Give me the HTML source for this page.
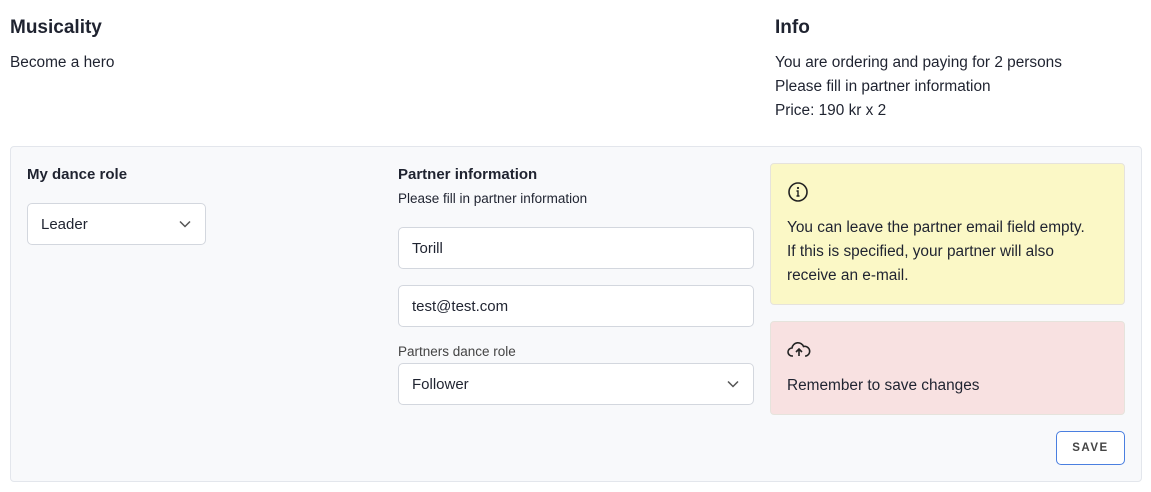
<!DOCTYPE html>
<html><head><style>
*{box-sizing:border-box;margin:0;padding:0}
body{width:1151px;height:492px;background:#fff;font-family:"Liberation Sans",sans-serif;color:#1f2330;position:relative;overflow:hidden}
.a{position:absolute}
h2{font-size:19px;font-weight:600}
.t{font-size:15.4px;line-height:24px}
.panel{left:10px;top:146px;width:1132px;height:336px;background:#f8f9fb;border:1px solid #e3e6ec;border-radius:4px}
.inp{background:#fff;border:1px solid #d3d7de;border-radius:5px;font-size:15px;padding-left:13px;display:flex;align-items:center}
.chev{position:absolute;right:14px;top:50%;margin-top:-4px}
.box{border:1px solid #e6e3dc;border-radius:4px}
</style></head><body>
<h2 class="a" style="left:10px;top:17px">Musicality</h2>
<div class="a t" style="left:10px;top:51px">Become a hero</div>
<h2 class="a" style="left:775px;top:17px">Info</h2>
<div class="a t" style="left:775px;top:51px">You are ordering and paying for 2 persons<br>Please fill in partner information<br>Price: 190 kr x 2</div>
<div class="a panel"></div>
<div class="a" style="left:27px;top:166px;font-size:15px;font-weight:600">My dance role</div>
<div class="a inp" style="left:27px;top:203px;width:179px;height:42px">Leader<svg class="chev" width="12" height="8" viewBox="0 0 12 8"><path d="M1 1.5l5 5 5-5" fill="none" stroke="#555" stroke-width="1.5"/></svg></div>
<div class="a" style="left:398px;top:166px;font-size:15px;font-weight:600">Partner information</div>
<div class="a" style="left:398px;top:191px;font-size:13.5px">Please fill in partner information</div>
<div class="a inp" style="left:398px;top:227px;width:356px;height:42px">Torill</div>
<div class="a inp" style="left:398px;top:285px;width:356px;height:42px">test@test.com</div>
<div class="a" style="left:398px;top:344px;font-size:13.5px;color:#444">Partners dance role</div>
<div class="a inp" style="left:398px;top:363px;width:356px;height:42px">Follower<svg class="chev" width="12" height="8" viewBox="0 0 12 8"><path d="M1 1.5l5 5 5-5" fill="none" stroke="#555" stroke-width="1.5"/></svg></div>
<div class="a box" style="left:770px;top:163px;width:355px;height:142px;background:#fbf8c6"></div>
<svg class="a" style="left:787px;top:181px" width="22" height="22" viewBox="0 0 22 22"><circle cx="11" cy="11" r="9" fill="none" stroke="#222" stroke-width="1.6"/><circle cx="11" cy="7" r="1.1" fill="#222"/><path d="M9.5 10h1.5v5M9.5 15h3" stroke="#222" stroke-width="1.4" fill="none"/></svg>
<div class="a t" style="left:787px;top:216px">You can leave the partner email field empty.<br>If this is specified, your partner will also<br>receive an e-mail.</div>
<div class="a box" style="left:770px;top:321px;width:355px;height:94px;background:#f8e1e1"></div>
<svg class="a" style="left:787px;top:340px" width="24" height="20" viewBox="0 0 24 20"><path d="M6 16H5a4 4 0 0 1 0-8 6 6 0 0 1 11.5-1.5A4.5 4.5 0 0 1 19 16h-1" fill="none" stroke="#222" stroke-width="1.6"/><path d="M12 16V9M9 12l3-3 3 3" fill="none" stroke="#222" stroke-width="1.6"/></svg>
<div class="a t" style="left:787px;top:374px">Remember to save changes</div>
<div class="a" style="left:1056px;top:431px;width:69px;height:34px;border:1px solid #4a7fe0;border-radius:5px;background:#fff;font-size:11.5px;letter-spacing:1.5px;font-weight:600;color:#444;display:flex;align-items:center;justify-content:center">SAVE</div>
</body></html>
